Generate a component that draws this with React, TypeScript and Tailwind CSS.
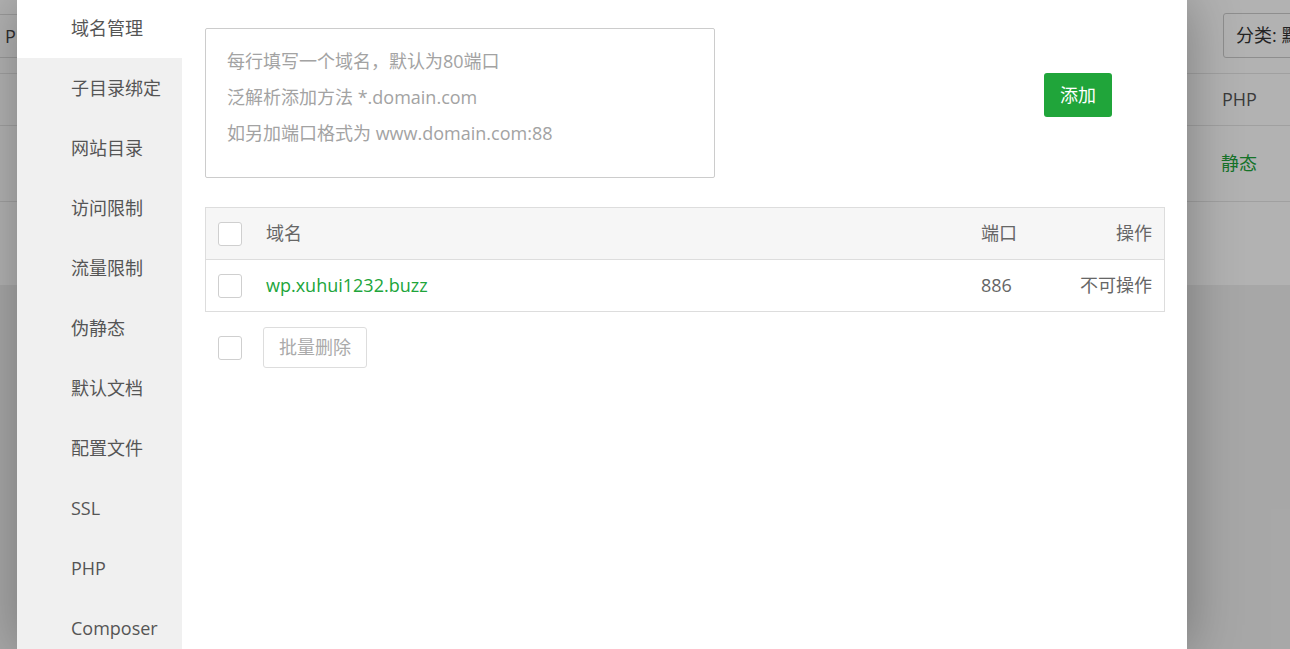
import React from "react";

const font = { fontFamily: '"Open Sans", "Noto Sans CJK SC", sans-serif' };

const items = ["域名管理", "子目录绑定", "网站目录", "访问限制", "流量限制", "伪静态", "默认文档", "配置文件", "SSL", "PHP", "Composer"];

function Box() {
  return <div className="w-[24px] h-[24px] shrink-0 rounded-[3px] border border-[#cfcfcf] bg-white" />;
}

export default function App() {
  return (
    <div className="relative w-[1290px] h-[649px] overflow-hidden bg-[#f0f0f0] text-[#555]" style={font}>
      {/* background page */}
      <div className="h-[285px] bg-white flex flex-col">
        <div className="h-[74px] border-b border-[#e6e6e6] flex items-start">
          <div className="mt-[14px] h-[44px] w-[300px] border-y border-[#ddd] pl-[5px] flex items-center text-[18px] text-[#444]">PHP项目</div>
          <div className="ml-auto mt-[13px] h-[45px] w-[120px] -mr-[53px] border border-[#ccc] rounded-[3px] pl-[12px] flex items-center text-[18px] text-[#333] whitespace-nowrap">分类: 默认分类</div>
        </div>
        <div className="h-[52px] border-b border-[#e6e6e6] grid grid-cols-[1222px_1fr] items-center text-[18px] text-[#555]">
          <span />
          <span>PHP</span>
        </div>
        <div className="h-[76px] border-b border-[#e6e6e6] grid grid-cols-[1221px_1fr] items-center text-[18px] text-[#20a53a]">
          <span />
          <span>静态</span>
        </div>
      </div>
      <div className="absolute inset-0 bg-black/30" />

      {/* modal */}
      <div className="absolute left-[17px] top-0 w-[1170px] h-[649px] bg-white flex shadow-[1px_1px_50px_rgba(0,0,0,0.3)]">
        <div className="w-[165px] bg-[#f0f0f0] flex flex-col -mt-[2px]">
          {items.map((t, i) => (
            <div
              key={t}
              className={
                "h-[60px] shrink-0 pl-[54px] flex items-center text-[18px] text-[#555] " +
                (i === 0 ? "bg-white" : "")
              }
            >
              {t}
            </div>
          ))}
        </div>
        <div className="flex-1 pl-[23px] pt-[28px]">
          <div className="flex items-start">
            <div className="w-[510px] h-[150px] border border-[#ccc] rounded-[2px] pl-[21px] pt-[14px] text-[18px] leading-[36px] text-[#a3a3a3]">
              <div>每行填写一个域名，默认为80端口</div>
              <div>泛解析添加方法 *.domain.com</div>
              <div>如另加端口格式为 www.domain.com:88</div>
            </div>
            <button className="ml-[329px] mt-[45px] w-[68px] h-[44px] rounded-[3px] bg-[#20a53a] text-white text-[18px]">添加</button>
          </div>

          <div className="mt-[29px] w-[960px] border border-[#ddd] text-[18px] text-[#666]">
            <div className="h-[52px] bg-[#f6f6f6] border-b border-[#ddd] flex items-center pl-[12px] pr-[12px]">
              <Box />
              <span className="ml-[24px] flex-1">域名</span>
              <span className="w-[135px]">端口</span>
              <span>操作</span>
            </div>
            <div className="h-[51px] flex items-center pl-[12px] pr-[12px]">
              <Box />
              <span className="ml-[24px] flex-1 text-[#20a53a]">wp.xuhui1232.buzz</span>
              <span className="w-[99px]">886</span>
              <span>不可操作</span>
            </div>
          </div>

          <div className="mt-[15px] flex items-center pl-[13px]">
            <Box />
            <button className="ml-[21px] h-[41px] w-[104px] border border-[#ddd] rounded-[3px] bg-white text-[18px] text-[#aaa]">批量删除</button>
          </div>
        </div>
      </div>
    </div>
  );
}
